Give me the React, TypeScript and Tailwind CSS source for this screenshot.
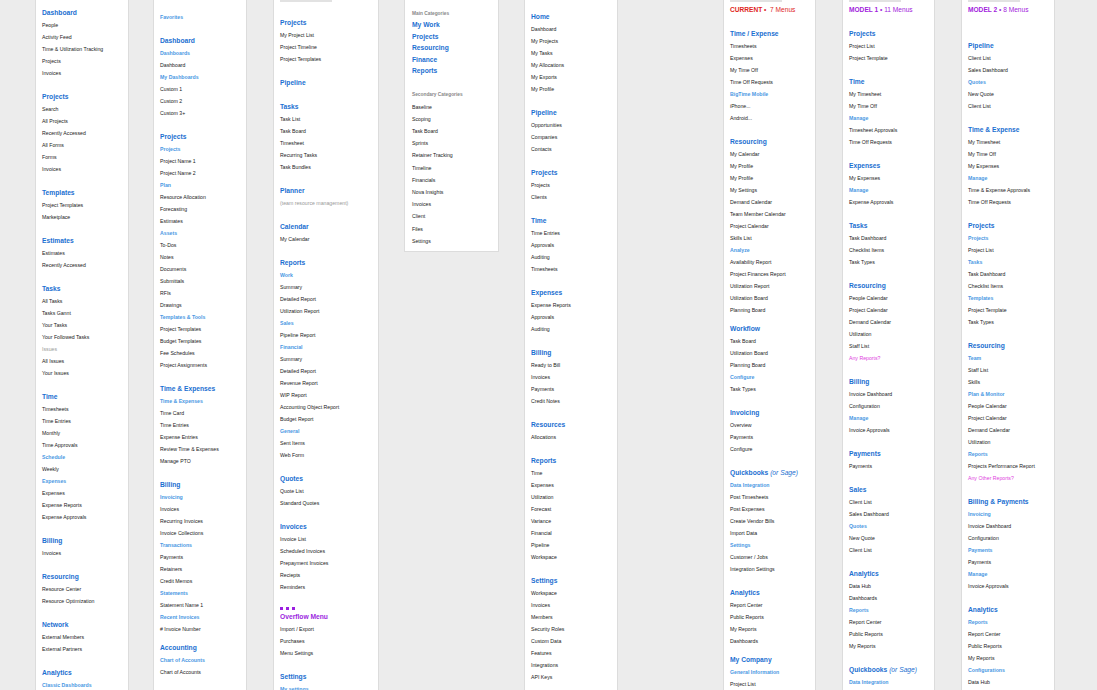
type Col = { w: string; pt: string; rows: string[]; boxed?: boolean; bar?: boolean };

// prefixes: "#" header, "~" sub-header, "!" gray note, "%" magenta note, "_" blank row, "_7" short blank, "*" overflow dots, "@" purple header
const cols: Col[] = [
  {
    w: "ml-[35px] w-[94px]",
    pt: "pt-[7px]",
    rows: [
      "#Dashboard", "People", "Activity Feed", "Time & Utilization Tracking", "Projects", "Invoices", "_",
      "#Projects", "Search", "All Projects", "Recently Accessed", "All Forms", "Forms", "Invoices", "_",
      "#Templates", "Project Templates", "Marketplace", "_",
      "#Estimates", "Estimates", "Recently Accessed", "_",
      "#Tasks", "All Tasks", "Tasks Gannt", "Your Tasks", "Your Followed Tasks", "!Issues", "All Issues", "Your Issues", "_",
      "#Time", "Timesheets", "Time Entries", "Monthly", "Time Approvals", "~Schedule", "Weekly", "~Expenses", "Expenses", "Expense Reports", "Expense Approvals", "_",
      "#Billing", "Invoices", "_",
      "#Resourcing", "Resource Center", "Resource Optimization", "_",
      "#Network", "External Members", "External Partners", "_",
      "#Analytics", "~Classic Dashboards",
    ],
  },
  {
    w: "ml-[24px] w-[94px]",
    pt: "pt-[11px]",
    rows: [
      "~Favorites", "_",
      "#Dashboard", "~Dashboards", "Dashboard", "~My Dashboards", "Custom 1", "Custom 2", "Custom 3+", "_",
      "#Projects", "~Projects", "Project Name 1", "Project Name 2", "~Plan", "Resource Allocation", "Forecasting", "Estimates",
      "~Assets", "To-Dos", "Notes", "Documents", "Submittals", "RFIs", "Drawings", "~Templates & Tools", "Project Templates", "Budget Templates", "Fee Schedules", "Project Assignments", "_",
      "#Time & Expenses", "~Time & Expenses", "Time Card", "Time Entries", "Expense Entries", "Review Time & Expenses", "Manage PTO", "_",
      "#Billing", "~Invoicing", "Invoices", "Recurring Invoices", "Invoice Collections", "~Transactions", "Payments", "Retainers", "Credit Memos",
      "~Statements", "Statement Name 1", "~Recent Invoices", "# Invoice Number", "_7",
      "#Accounting", "~Chart of Accounts", "Chart of Accounts",
    ],
  },
  {
    w: "ml-[26px] w-[106px]",
    pt: "pt-[17px]",
    bar: true,
    rows: [
      "#Projects", "My Project List", "Project Timeline", "Project Templates", "_",
      "#Pipeline", "_",
      "#Tasks", "Task List", "Task Board", "Timesheet", "Recurring Tasks", "Task Bundles", "_",
      "#Planner", "!(team resource management)", "_",
      "#Calendar", "My Calendar", "_",
      "#Reports", "~Work", "Summary", "Detailed Report", "Utilization Report", "~Sales", "Pipeline Report", "~Financial", "Summary", "Detailed Report",
      "Revenue Report", "WIP Report", "Accounting Object Report", "Budget Report", "~General", "Sent Items", "Web Form", "_",
      "#Quotes", "Quote List", "Standard Quotes", "_",
      "#Invoices", "Invoice List", "Scheduled Invoices", "Prepayment Invoices", "Reciepts", "Reminders",
      "*", "@Overflow Menu", "Import / Export", "Purchases", "Menu Settings", "_",
      "#Settings", "~My settings",
    ],
  },
  {
    w: "ml-[25px] w-[95px]",
    pt: "pt-[7px]",
    boxed: true,
    rows: [],
  },
  {
    w: "ml-[25px] w-[94px]",
    pt: "pt-[11px]",
    rows: [
      "#Home", "Dashboard", "My Projects", "My Tasks", "My Allocations", "My Exports", "My Profile", "_",
      "#Pipeline", "Opportunities", "Companies", "Contacts", "_",
      "#Projects", "Projects", "Clients", "_",
      "#Time", "Time Entries", "Approvals", "Auditing", "Timesheets", "_",
      "#Expenses", "Expense Reports", "Approvals", "Auditing", "_",
      "#Billing", "Ready to Bill", "Invoices", "Payments", "Credit Notes", "_",
      "#Resources", "Allocations", "_",
      "#Reports", "Time", "Expenses", "Utilization", "Forecast", "Variance", "Financial", "Pipeline", "Workspace", "_",
      "#Settings", "Workspace", "Invoices", "Members", "Security Roles", "Custom Data", "Features", "Integrations", "API Keys",
    ],
  },
  {
    w: "ml-[105px] w-[93px]",
    pt: "pt-[4px]",
    bar: true,
    rows: [
      "CURRENT", "_",
      "#Time / Expense", "Timesheets", "Expenses", "My Time Off", "Time Off Requests", "~BigTime Mobile", "iPhone...", "Android...", "_",
      "#Resourcing", "My Calendar", "My Profile", "My Profile", "My Settings", "Demand Calendar", "Team Member Calendar", "Project Calendar", "Skills List",
      "~Analyze", "Availability Report", "Project Finances Report", "Utilization Report", "Utilization Board", "Planning Board", "_7",
      "#Workflow", "Task Board", "Utilization Board", "Planning Board", "~Configure", "Task Types", "_",
      "#Invoicing", "Overview", "Payments", "Configure", "_",
      "#Quickbooks", "~Data Integration", "Post Timesheets", "Post Expenses", "Create Vendor Bills", "Import Data", "~Settings", "Customer / Jobs", "Integration Settings", "_",
      "#Analytics", "Report Center", "Public Reports", "My Reports", "Dashboards", "_7",
      "#My Company", "~General Information", "Project List",
    ],
  },
  {
    w: "ml-[26px] w-[93px]",
    pt: "pt-[4px]",
    bar: true,
    rows: [
      "MODEL 1", "_",
      "#Projects", "Project List", "Project Template", "_",
      "#Time", "My Timesheet", "My Time Off", "~Manage", "Timesheet Approvals", "Time Off Requests", "_",
      "#Expenses", "My Expenses", "~Manage", "Expense Approvals", "_",
      "#Tasks", "Task Dashboard", "Checklist Items", "Task Types", "_",
      "#Resourcing", "People Calendar", "Project Calendar", "Demand Calendar", "Utilization", "Staff List", "%Any Reports?", "_",
      "#Billing", "Invoice Dashboard", "Configuration", "~Manage", "Invoice Approvals", "_",
      "#Payments", "Payments", "_",
      "#Sales", "Client List", "Sales Dashboard", "~Quotes", "New Quote", "Client List", "_",
      "#Analytics", "Data Hub", "Dashboards", "~Reports", "Report Center", "Public Reports", "My Reports", "_",
      "#Quickbooks", "~Data Integration",
    ],
  },
  {
    w: "ml-[26px] w-[94px]",
    pt: "pt-[4px]",
    bar: true,
    rows: [
      "MODEL 2", "_", "_",
      "#Pipeline", "Client List", "Sales Dashboard", "~Quotes", "New Quote", "Client List", "_",
      "#Time & Expense", "My Timesheet", "My Time Off", "My Expenses", "~Manage", "Time & Expense Approvals", "Time Off Requests", "_",
      "#Projects", "~Projects", "Project List", "~Tasks", "Task Dashboard", "Checklist Items", "~Templates", "Project Template", "Task Types", "_",
      "#Resourcing", "~Team", "Staff List", "Skills", "~Plan & Monitor", "People Calendar", "Project Calendar", "Demand Calendar", "Utilization",
      "~Reports", "Projects Performance Report", "%Any Other Reports?", "_",
      "#Billing & Payments", "~Invoicing", "Invoice Dashboard", "Configuration", "~Payments", "Payments", "~Manage", "Invoice Approvals", "_",
      "#Analytics", "~Reports", "Report Center", "Public Reports", "My Reports", "~Configurations", "Data Hub",
    ],
  },
];

function Row({ r }: { r: string }) {
  if (r === "_") return <div className="h-[12px]" />;
  if (r === "_7") return <div className="h-[7px]" />;
  if (r === "*")
    return (
      <div className="h-[18px] flex items-end gap-[3px] pb-[1px]">
        <span className="w-[3px] h-[3px] bg-[#9b1fe0]" />
        <span className="w-[3px] h-[3px] bg-[#9b1fe0]" />
        <span className="w-[3px] h-[3px] bg-[#9b1fe0]" />
      </div>
    );
  if (r === "CURRENT")
    return (
      <div className="h-[12px] leading-[12px] text-[6.6px] text-[#e0261c] whitespace-nowrap">
        <span className="font-bold">CURRENT</span> • &nbsp;7 Menus
      </div>
    );
  if (r.startsWith("MODEL"))
    return (
      <div className="h-[12px] leading-[12px] text-[6.6px] text-[#a224dc] whitespace-nowrap">
        <span className="font-bold">{r}</span> • {r === "MODEL 1" ? "11 Menus" : "8  Menus"}
      </div>
    );
  const base = "h-[12px] leading-[12px] whitespace-nowrap";
  if (r === "#Quickbooks")
    return (
      <div className={`${base} text-[6.7px] font-bold text-[#1b6fd1]`}>
        Quickbooks <span className="italic font-normal">(or Sage)</span>
      </div>
    );
  if (r[0] === "#" && r[1] !== " ") return <div className={`${base} text-[6.7px] font-bold text-[#1b6fd1]`}>{r.slice(1)}</div>;
  if (r[0] === "@") return <div className={`${base} text-[6.7px] font-bold text-[#9b1fe0]`}>{r.slice(1)}</div>;
  if (r[0] === "~") return <div className={`${base} text-[5.2px] font-bold text-[#4a98e3]`}>{r.slice(1)}</div>;
  if (r[0] === "!") return <div className={`${base} text-[5.2px] text-[#999]`}>{r.slice(1)}</div>;
  if (r[0] === "%") return <div className={`${base} text-[5.2px] text-[#e03ee0]`}>{r.slice(1)}</div>;
  return <div className={`${base} text-[5.2px] text-[#222]`}>{r}</div>;
}

function Categories() {
  const main = ["My Work", "Projects", "Resourcing", "Finance", "Reports"];
  const sec = ["Baseline", "Scoping", "Task Board", "Sprints", "Retainer Tracking", "Timeline", "Financials", "Nova Insights", "Invoices", "Client", "Files", "Settings"];
  return (
    <div className="h-[252px] bg-white border border-[#dcdcdc] border-t-0 px-[7px] pt-[8px]">
      <div className="text-[4.8px] font-bold text-[#888] leading-[11px]">Main Categories</div>
      {main.map((m) => (
        <div key={m} className="text-[6.7px] font-bold text-[#1b6fd1] leading-[11.5px]">{m}</div>
      ))}
      <div className="h-[12px]" />
      <div className="text-[4.8px] font-bold text-[#888] leading-[12px]">Secondary Categories</div>
      {sec.map((s) => (
        <div key={s} className="text-[5.2px] text-[#222] leading-[12.2px]">{s}</div>
      ))}
    </div>
  );
}

export default function App() {
  return (
    <div className="w-[1097px] h-[690px] overflow-hidden bg-[#ececec] flex items-start font-[Liberation_Sans]">
      {cols.map((c, i) =>
        c.boxed ? (
          <div key={i} className={`${c.w} shrink-0`}>
            <Categories />
          </div>
        ) : (
          <div key={i} className={`${c.w} shrink-0 h-[690px] bg-white border-x border-[#dcdcdc] px-[6px] ${c.pt} relative`}>
            {c.bar && <div className="absolute top-0 left-[6px] w-[52px] h-[2px] bg-[#e2e2e2]" />}
            {c.rows.map((r, j) => (
              <Row key={j} r={r} />
            ))}
          </div>
        )
      )}
    </div>
  );
}
